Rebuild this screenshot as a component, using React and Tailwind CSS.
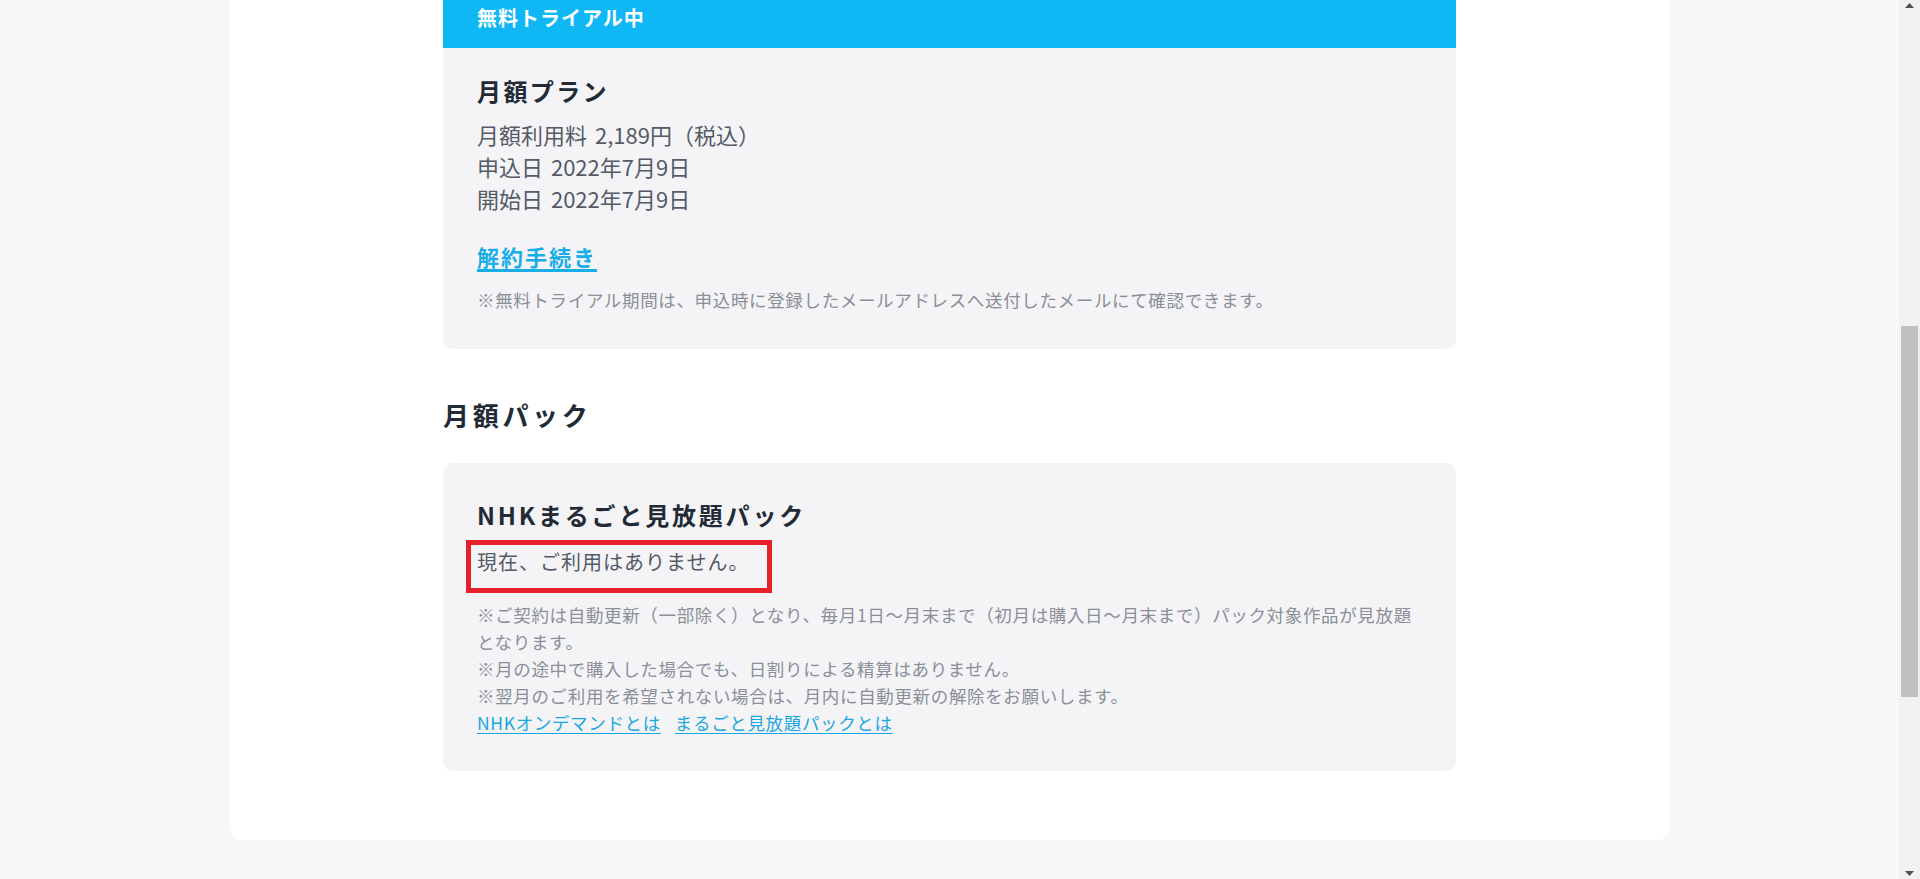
export default function App() {
  return (
    <div className="flex h-[879px] w-full overflow-hidden bg-[#f6f7f9] font-['Noto_Sans_CJK_JP','Noto_Sans',sans-serif]">
      <div className="min-w-0 flex-1">
        <div className="mx-auto w-[1440px] rounded-b-[12px] bg-white pb-[69px]">
          <div className="mx-auto w-[1013px]">
            <section className="overflow-hidden rounded-b-[10px] bg-[#f4f4f6]">
              <div className="h-[48px] bg-[#10b7f5] px-[34px] pt-[4px] text-[20px] font-bold leading-[28px] tracking-[1px] text-white">
                無料トライアル中
              </div>
              <div className="px-[34px] pb-[36px] pt-[27px]">
                <h2 className="text-[24px] font-bold leading-[32px] tracking-[2.4px] text-[#222a35]">
                  月額プラン
                </h2>
                <div className="mt-[11px] text-[22px] leading-[32px] tracking-[0px] text-[#545b66] [word-spacing:3px]">
                  <p>月額利用料 2,189円（税込）</p>
                  <p>申込日 2022年7月9日</p>
                  <p>開始日 2022年7月9日</p>
                </div>
                <div className="mt-[29px] flex">
                  <a className="block border-b-[3px] border-[#19aee8] text-[22px] font-bold leading-[26px] tracking-[2px] text-[#19aee8]">
                    解約手続き
                  </a>
                </div>
                <p className="mt-[13.5px] text-[17.5px] leading-[27px] tracking-[0.65px] text-[#8a8f98]">
                  ※無料トライアル期間は、申込時に登録したメールアドレスへ送付したメールにて確認できます。
                </p>
              </div>
            </section>

            <h2 className="mt-[48px] text-[26px] font-bold leading-[36px] tracking-[3.7px] text-[#222a35]">
              月額パック
            </h2>

            <section className="mt-[30px] rounded-[10px] bg-[#f4f4f6] px-[34px] pb-[35px] pt-[36px]">
              <h3 className="text-[24px] font-bold leading-[32px] tracking-[2.8px] text-[#222a35]">
                NHKまるごと見放題パック
              </h3>
              <div className="relative mt-[17px] text-[20px] leading-[28px] tracking-[1px] text-[#545b66]">
                <p>現在、ご利用はありません。</p>
                <div className="pointer-events-none absolute left-[-11px] top-[-8px] h-[53px] w-[306px] border-[5px] border-[#e5202a]"></div>
              </div>
              <div className="mt-[25px] text-[17.5px] leading-[27px] tracking-[0.65px] text-[#8a8f98]">
                <p>
                  ※ご契約は自動更新（一部除く）となり、毎月1日～月末まで（初月は購入日～月末まで）パック対象作品が見放題となります。
                </p>
                <p>※月の途中で購入した場合でも、日割りによる精算はありません。</p>
                <p>※翌月のご利用を希望されない場合は、月内に自動更新の解除をお願いします。</p>
                <div className="flex gap-[14px] text-[#1ca6de]">
                  <a className="underline decoration-1 underline-offset-[3px]">NHKオンデマンドとは</a>
                  <a className="underline decoration-1 underline-offset-[3px]">まるごと見放題パックとは</a>
                </div>
              </div>
            </section>
          </div>
        </div>
      </div>

      <div className="flex w-[21px] shrink-0 flex-col bg-[#f1f1f1]">
        <div className="flex h-[21px] justify-center pt-[3px]">
          <svg width="9" height="5" viewBox="0 0 9 5">
            <path d="M4.5 0L9 5H0z" fill="#505050" />
          </svg>
        </div>
        <div className="flex flex-1 flex-col px-[2px]">
          <div className="h-[305px]"></div>
          <div className="h-[371px] bg-[#c1c1c1]"></div>
        </div>
        <div className="flex h-[21px] items-end justify-center pb-[3px]">
          <svg width="9" height="5" viewBox="0 0 9 5">
            <path d="M0 0H9L4.5 5z" fill="#505050" />
          </svg>
        </div>
      </div>
    </div>
  );
}
